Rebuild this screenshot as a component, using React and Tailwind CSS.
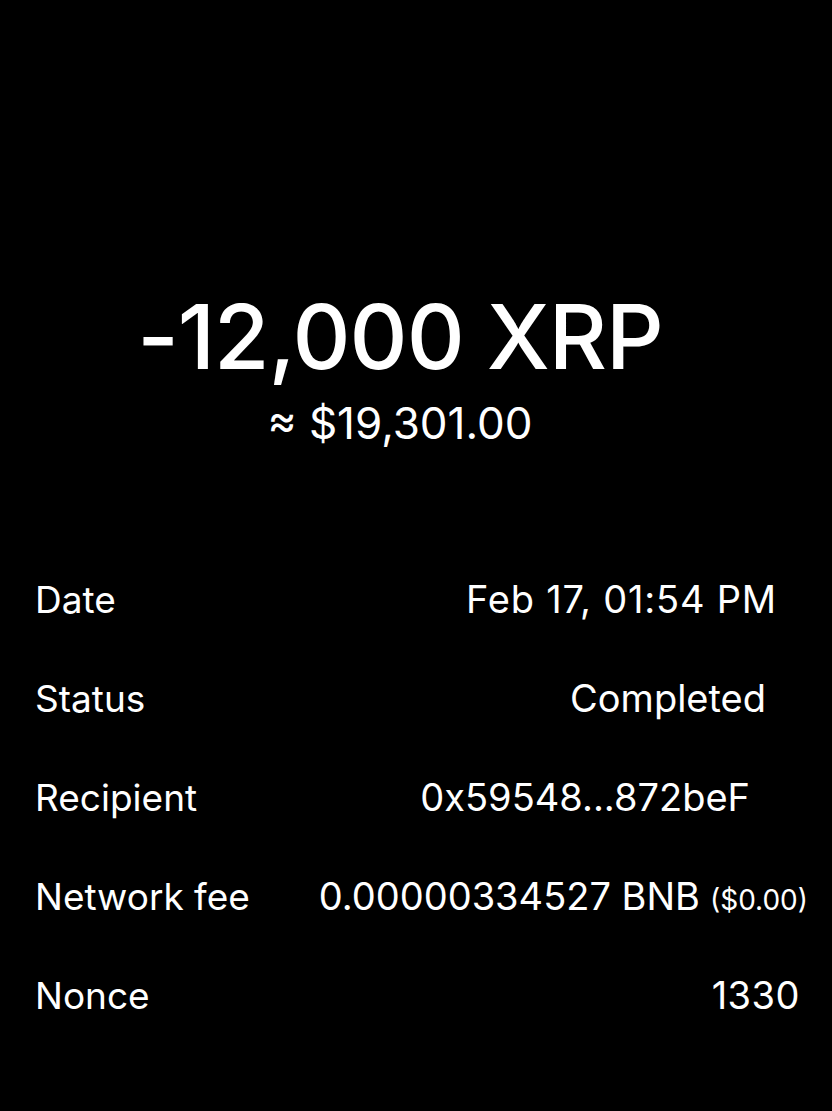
const rows = [
  { label: 'Date', value: 'Feb 17, 01:54 PM', pad: 'pr-[55px] tracking-[0.8px]' },
  { label: 'Status', value: 'Completed', pad: 'pr-[66px]' },
  { label: 'Recipient', value: '0x59548...872beF', pad: 'pr-[82px]' },
  { label: 'Network fee', value: '0.00000334527 BNB', note: '($0.00)', pad: 'pr-[24px]' },
  { label: 'Nonce', value: '1330', pad: 'pr-[32px] tracking-[0.5px]' },
];

export default function App() {
  return (
    <div className="min-h-[1111px] w-[832px] bg-black text-white font-['Inter',sans-serif]">
      <div className="flex flex-col items-center pt-[292px] pr-[32px]">
        <h1 className="text-[90px] leading-[90px] font-medium tracking-[-1px]">-12,000 XRP</h1>
        <p className="mt-[18px] text-[44px] leading-[46px]">≈ $19,301.00</p>
      </div>

      <div className="mt-[104px] pl-[35px]">
        {rows.map((row) => (
          <div key={row.label} className="flex items-center justify-between h-[99px] text-[37px]">
            <span>{row.label}</span>
            <span className={`text-[38px] ${row.pad}`}>
              {row.value}
              {row.note && <span className="ml-[10px] text-[28px]">{row.note}</span>}
            </span>
          </div>
        ))}
      </div>
    </div>
  );
}
